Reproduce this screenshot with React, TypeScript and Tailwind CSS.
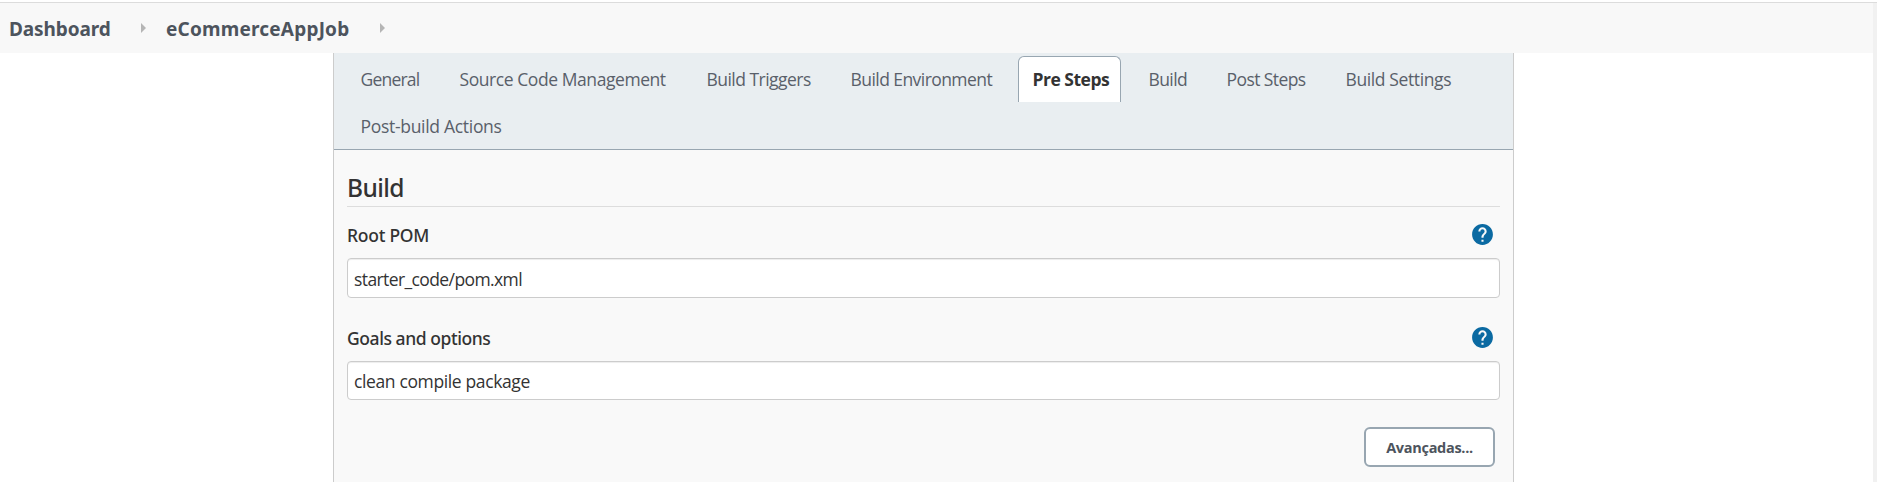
import React from "react";
import { MdHelp } from "react-icons/md";

const tabs = [
  { label: "General", width: "w-[86px]", tracking: "tracking-[-0.78px]" },
  { label: "Source Code Management", width: "w-[234px]", tracking: "tracking-[-0.43px]" },
  { label: "Build Triggers", width: "w-[131px]", tracking: "tracking-[-0.53px]" },
  { label: "Build Environment", width: "w-[169px]", tracking: "tracking-[-0.56px]" },
  { label: "Pre Steps", width: "w-[103px]", tracking: "tracking-[-0.5px]", active: true },
  { label: "Build", width: "w-[65px]", tracking: "tracking-[-0.6px]" },
  { label: "Post Steps", width: "w-[106px]", tracking: "tracking-[-0.58px]" },
  { label: "Build Settings", width: "w-[132px]", tracking: "tracking-[-0.38px]" },
  { label: "Post-build Actions", width: "w-[170px]", tracking: "tracking-[-0.3px]" },
];

function Arrow() {
  return (
    <svg className="h-2.5 w-[5px] fill-[#b5b5b5]" viewBox="0 0 5 10">
      <path d="M0 0 5 5 0 10Z" />
    </svg>
  );
}

function Breadcrumbs() {
  return (
    <nav className="flex h-[50px] items-center bg-[#f8f8f8] pl-[9px] font-['Noto_Sans'] font-bold text-[#4d545d]">
      <a className="w-[132px] pt-[3px] text-[19px] tracking-[-0.1px]">Dashboard</a>
      <Arrow />
      <a className="ml-5 w-[214px] pt-[3px] text-[19px] tracking-[0.2px]">eCommerceAppJob</a>
      <Arrow />
    </nav>
  );
}

function Tabs() {
  return (
    <div className="flex h-[97px] flex-wrap content-start gap-x-[13px] gap-y-px border-b border-[#98a6b1] bg-[#e9eef1] pt-[3px] pl-3">
      {tabs.map((tab) => (
        <a
          key={tab.label}
          className={`flex h-[46px] items-center rounded-t-md border border-b-0 pb-px pl-[13.5px] text-[17.5px] whitespace-nowrap ${tab.width} ${tab.tracking} ${
            tab.active ? "border-[#98a6b1] bg-white font-bold text-[#333]" : "border-transparent text-[#59606a]"
          }`}
        >
          {tab.label}
        </a>
      ))}
    </div>
  );
}

function FieldLabel({ children, tracking }: { children: string; tracking: string }) {
  return (
    <div className="flex h-[25px] items-center justify-between pr-[5px]">
      <label className={`pt-0.5 font-['Noto_Sans'] text-[17.5px] font-medium ${tracking}`}>{children}</label>
      <MdHelp className="size-[25px] text-[#0b6aa2]" />
    </div>
  );
}

export default function App() {
  return (
    <div className="flex h-[482px] flex-col overflow-hidden bg-white pt-0.5 font-['Open_Sans',sans-serif] text-[#333]">
      <div className="h-px bg-[#dcdcdc]" />
      <div className="flex flex-1">
        <div className="flex flex-1 flex-col">
          <Breadcrumbs />
          <main className="ml-[333px] w-[1181px] flex-1 border-x border-[#ccc] bg-[#f9f9f9]">
            <Tabs />
            <section className="px-[13px]">
              <h1 className="h-[57px] border-b border-[#ddd] pt-5 font-['Noto_Sans'] text-[24.5px] leading-[35px] font-medium tracking-[-0.6px]">
                Build
              </h1>
              <div className="pt-[15px]">
                <FieldLabel tracking="tracking-[-0.25px]">Root POM</FieldLabel>
                <input
                  className="mt-[11px] block h-10 w-full rounded border border-[#ccc] bg-white px-1.5 pt-0.5 text-[17.5px] tracking-[-0.6px] shadow-[inset_0_1px_1px_rgba(0,0,0,0.075)]"
                  defaultValue="starter_code/pom.xml"
                />
              </div>
              <div className="pt-[27px]">
                <FieldLabel tracking="tracking-[-0.43px]">Goals and options</FieldLabel>
                <input
                  className="mt-[11px] block h-[39px] w-full rounded border border-[#ccc] bg-white px-1.5 text-[17.5px] tracking-[-0.37px] shadow-[inset_0_1px_1px_rgba(0,0,0,0.075)]"
                  defaultValue="clean compile package"
                />
              </div>
              <div className="flex justify-end pt-[27px] pr-[5px]">
                <button className="h-10 w-[131px] rounded-md border-2 border-[#98a6b1] bg-white pt-px text-[14.5px] font-bold tracking-[-0.3px] text-[#4d545d]">
                  Avançadas...
                </button>
              </div>
            </section>
          </main>
        </div>
        <div className="w-1 bg-[#f1f1f1]" />
      </div>
    </div>
  );
}
